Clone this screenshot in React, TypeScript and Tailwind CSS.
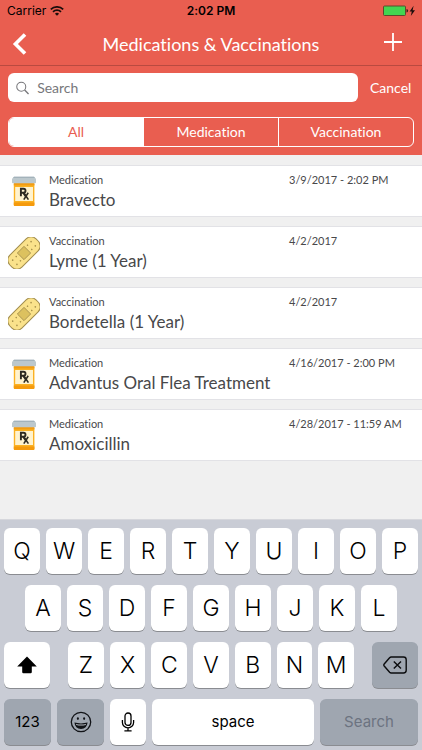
import { useState } from "react";
import clsx from "clsx";

type RecordKind = "Medication" | "Vaccination";

interface PetRecord {
  id: number;
  kind: RecordKind;
  name: string;
  date: string;
}

const RECORDS: PetRecord[] = [
  { id: 1, kind: "Medication", name: "Bravecto", date: "3/9/2017 - 2:02 PM" },
  { id: 2, kind: "Vaccination", name: "Lyme (1 Year)", date: "4/2/2017" },
  { id: 3, kind: "Vaccination", name: "Bordetella (1 Year)", date: "4/2/2017" },
  { id: 4, kind: "Medication", name: "Advantus Oral Flea Treatment", date: "4/16/2017 - 2:00 PM" },
  { id: 5, kind: "Medication", name: "Amoxicillin", date: "4/28/2017 - 11:59 AM" },
];

const FILTERS = ["All", "Medication", "Vaccination"];

const ROW_ONE = "QWERTYUIOP".split("");
const ROW_TWO = "ASDFGHJKL".split("");
const ROW_THREE = "ZXCVBNM".split("");

function PillBottleIcon() {
  return (
    <svg viewBox="0 0 32 32" className="h-8 w-8" aria-hidden="true">
      <path d="M5.8 8h20.6v21q0 1-1 1H6.8q-1 0-1-1z" fill="#fbb122" />
      <path d="M5.8 26.5h20.6V29q0 1-1 1H6.8q-1 0-1-1z" fill="#f59a0c" />
      <path d="M5.8 7h20.6v2.4H5.8z" fill="#f39c12" />
      <rect x="7.2" y="11" width="17.8" height="14" fill="#fff3cf" />
      <path d="M6 0.8h20l2 2v3.6q0 0.8-1 0.8H5q-1 0-1-0.8V2.8z" fill="#bcc8cd" />
      <path d="M6 0.8h20l1 1H5z" fill="#9babb3" />
      <g fill="none" stroke="#2d2a22" strokeWidth="1.9">
        <path d="M12.9 20.2v-7.4h2.6a2 2 0 0 1 0 4h-2.6M15.2 16.8l2.4 3.4" />
        <path d="M15.8 16.8l4.6 6.8M20.2 16.8l-4.4 6.8" strokeWidth="1.6" />
      </g>
    </svg>
  );
}

function BandageIcon() {
  return (
    <svg viewBox="0 0 32 32" className="h-8 w-8" aria-hidden="true">
      <g transform="rotate(-45 16 16)">
        <rect x="-2.5" y="7.5" width="37" height="17" rx="7" fill="#fae28b" stroke="#a08c4e" strokeWidth="1" />
        <rect x="11.3" y="11.3" width="9.4" height="9.4" fill="#dcc15f" stroke="#a08c4e" strokeWidth="0.8" />
        <g fill="#a8914a">
          <circle cx="3" cy="13" r="0.8" />
          <circle cx="3" cy="19" r="0.8" />
          <circle cx="8" cy="13" r="0.8" />
          <circle cx="8" cy="19" r="0.8" />
          <circle cx="24" cy="13" r="0.8" />
          <circle cx="24" cy="19" r="0.8" />
          <circle cx="29" cy="13" r="0.8" />
          <circle cx="29" cy="19" r="0.8" />
        </g>
      </g>
    </svg>
  );
}

function StatusBar() {
  return (
    <div className="grid h-[22px] grid-cols-3 items-center px-[7px] font-['Inter',sans-serif] text-xs text-black">
      <div className="flex items-center gap-1">
        <span>Carrier</span>
        <svg viewBox="0 0 14 10" className="h-[10px] w-[14px]" fill="none" stroke="#1b0d0b" strokeWidth="1.7" aria-hidden="true">
          <path d="M0.8 3.4a8.8 8.8 0 0 1 12.4 0" />
          <path d="M3 5.8a5.7 5.7 0 0 1 8 0" />
          <path d="M7 9.8L4.9 7.7a3 3 0 0 1 4.2 0z" fill="#1b0d0b" stroke="none" />
        </svg>
      </div>
      <span className="text-center font-semibold">2:02 PM</span>
      <svg viewBox="0 0 34 12" className="h-3 w-[34px] justify-self-end" aria-hidden="true">
        <rect x="2.5" y="1" width="22" height="9.5" rx="1" fill="#43d551" stroke="#5c4a2c" />
        <path d="M25.5 4q1.6 0.3 1.6 1.8t-1.6 1.8z" fill="#3a1f1a" />
        <path d="M32.6 0.8L28.6 6.4h2.2L29.8 11l4.2-5.8h-2.4z" fill="#1b0d0b" />
      </svg>
    </div>
  );
}

function RecordRow({ record }: { record: PetRecord }) {
  return (
    <li className="flex items-center gap-[9px] border-y border-[#e2e2e6] bg-white pt-[6px] pb-1 pl-2 text-[#48484a]">
      {record.kind === "Medication" ? <PillBottleIcon /> : <BandageIcon />}
      <div className="min-w-0 flex-1">
        <div className="flex text-[11px] leading-4">
          <span className="flex-1">{record.kind}</span>
          <span className="w-[133px]">{record.date}</span>
        </div>
        <p className="truncate text-[17px] leading-6">{record.name}</p>
      </div>
    </li>
  );
}

const KEY_BASE = "flex h-[46px] items-center justify-center rounded-md shadow-[0_1px_0_#8a8c91]";

function LetterKey({ letter, onPress }: { letter: string; onPress: (letter: string) => void }) {
  return (
    <button type="button" onClick={() => onPress(letter)} className={clsx(KEY_BASE, "min-w-0 flex-1 bg-white text-[23px] font-light")}>
      {letter}
    </button>
  );
}

function Keyboard({ onType, onDelete }: { onType: (text: string) => void; onDelete: () => void }) {
  return (
    <div className="mt-auto flex flex-col gap-[11px] border-t border-[#d6d7dc] bg-[#c9ccd5] px-[4px] pt-[8px] pb-[5px] font-['Inter',sans-serif] text-black">
      <div className="flex gap-[6px]">
        {ROW_ONE.map((letter) => (
          <LetterKey key={letter} letter={letter} onPress={onType} />
        ))}
      </div>
      <div className="flex gap-[6px] px-[21px]">
        {ROW_TWO.map((letter) => (
          <LetterKey key={letter} letter={letter} onPress={onType} />
        ))}
      </div>
      <div className="flex gap-[18px]">
        <button type="button" aria-label="Shift" className={clsx(KEY_BASE, "w-[46px] bg-white")}>
          <svg viewBox="0 0 20 18" className="h-[18px] w-5" aria-hidden="true">
            <path d="M10 0.5L19.8 10.6h-5V16q0 1.2-1.2 1.2H6.4Q5.2 17.2 5.2 16v-5.4h-5z" fill="#000" />
          </svg>
        </button>
        <div className="flex flex-1 gap-[6px]">
          {ROW_THREE.map((letter) => (
            <LetterKey key={letter} letter={letter} onPress={onType} />
          ))}
        </div>
        <button type="button" aria-label="Delete" onClick={onDelete} className={clsx(KEY_BASE, "w-[46px] bg-[#9fa6b0]")}>
          <svg viewBox="0 0 24 18" className="h-[18px] w-6" fill="none" stroke="#0b0c0e" strokeWidth="1.4" strokeLinejoin="round" aria-hidden="true">
            <path d="M8.2 1h12.3q2.7 0 2.7 2.7v10.6q0 2.7-2.7 2.7H8.2Q7.3 17 6.6 16.3L1.2 10q-0.8-1 0-2L6.6 1.7Q7.3 1 8.2 1z" />
            <path d="M10.8 5.4l7.2 7.2M18 5.4l-7.2 7.2" />
          </svg>
        </button>
      </div>
      <div className="flex gap-[6px]">
        <button type="button" className={clsx(KEY_BASE, "w-[47px] bg-[#9fa6b0] text-[15px]")}>
          123
        </button>
        <button type="button" aria-label="Emoji" className={clsx(KEY_BASE, "w-[47px] bg-[#9fa6b0]")}>
          <svg viewBox="0 0 22 22" className="h-[22px] w-[22px]" aria-hidden="true">
            <circle cx="11" cy="11" r="9.7" fill="none" stroke="#111317" strokeWidth="1.3" />
            <ellipse cx="7.9" cy="7.6" rx="1" ry="1.4" fill="#111317" />
            <ellipse cx="14.1" cy="7.6" rx="1" ry="1.4" fill="#111317" />
            <path d="M4.4 11.6q6.6 1.6 13.2 0q-0.7 6.3-6.6 6.3t-6.6-6.3z" fill="#111317" />
            <path d="M5.9 12.9q5.1 1 10.2 0l-0.4 1q-4.7 1-9.4 0z" fill="#b9bec6" />
          </svg>
        </button>
        <button type="button" aria-label="Dictate" className={clsx(KEY_BASE, "w-[36px] bg-white")}>
          <svg viewBox="0 0 14 20" className="h-5 w-[14px]" fill="none" stroke="#000" strokeWidth="1.3" aria-hidden="true">
            <rect x="4" y="1" width="6" height="12.4" rx="3" />
            <path d="M1.4 8v2.6a5.6 5.2 0 0 0 11.2 0V8M7 15.8v2.8M3.4 18.8h7.2" />
          </svg>
        </button>
        <button type="button" onClick={() => onType(" ")} className={clsx(KEY_BASE, "flex-1 bg-white text-[15px]")}>
          space
        </button>
        <button type="button" disabled className={clsx(KEY_BASE, "w-[98px] bg-[#9fa6b0] text-[15px] text-[#6c7380]")}>
          Search
        </button>
      </div>
    </div>
  );
}

export default function App() {
  const [query, setQuery] = useState<string>("");
  const [activeFilter, setActiveFilter] = useState<string>("All");

  const visibleRecords = RECORDS.filter(
    (record) =>
      (activeFilter === "All" || record.kind === activeFilter) &&
      record.name.toLowerCase().includes(query.toLowerCase())
  );

  return (
    <div className="flex min-h-screen flex-col bg-[#f0f0f0] font-['Lato',sans-serif] [font-variant-ligatures:none]">
      <header className="bg-[#e95e50] text-white">
        <StatusBar />

        {/* Navigation bar */}
        <div className="flex h-[44px] items-center justify-between border-b border-[#b94a40] px-[12px]">
          <button type="button" aria-label="Back" className="w-8">
            <svg viewBox="0 0 16 22" className="h-[22px] w-4" fill="none" stroke="#fff" strokeWidth="3.6" aria-hidden="true">
              <path d="M13 1.4L3.4 11L13 20.6" />
            </svg>
          </button>
          <h1 className="text-lg leading-6">Medications &amp; Vaccinations</h1>
          <button type="button" aria-label="Add" className="flex w-8 justify-end pr-2 pb-1">
            <svg viewBox="0 0 18 18" className="h-[18px] w-[18px] shrink-0" stroke="#fff" strokeWidth="1.8" aria-hidden="true">
              <path d="M9 0v18M0 9h18" />
            </svg>
          </button>
        </div>

        {/* Search and filter */}
        <div className="flex flex-col gap-[15px] px-2 pt-[7px] pb-2">
          <div className="flex items-center gap-3">
            <label className="flex h-[29px] flex-1 items-center gap-2 rounded-md bg-white pl-2">
              <svg viewBox="0 0 14 14" className="h-[14px] w-[14px]" fill="none" stroke="#77777b" strokeWidth="1.1" aria-hidden="true">
                <circle cx="5.6" cy="5.6" r="4.8" />
                <path d="M9.2 9.2l4.2 4.2" strokeWidth="1.5" />
              </svg>
              <input
                type="text"
                aria-label="Search"
                placeholder="Search"
                value={query}
                onChange={(e) => setQuery(e.target.value)}
                className="w-full bg-transparent text-sm text-[#48484a] outline-none placeholder:text-[#77777b]"
              />
            </label>
            <button type="button" onClick={() => setQuery("")} className="w-11 text-left text-sm">
              Cancel
            </button>
          </div>

          <div className="flex h-[30px] overflow-hidden rounded-md border border-white">
            {FILTERS.map((filter) => (
              <button
                key={filter}
                type="button"
                aria-pressed={activeFilter === filter}
                onClick={() => setActiveFilter(filter)}
                className={clsx(
                  "flex-1 border-l border-white text-sm first:border-l-0",
                  activeFilter === filter ? "bg-white text-[#e95e50]" : "text-white"
                )}
              >
                {filter}
              </button>
            ))}
          </div>
        </div>
      </header>

      <ul className="flex flex-col gap-[9px] py-[10px]">
        {visibleRecords.map((record) => (
          <RecordRow key={record.id} record={record} />
        ))}
      </ul>

      <Keyboard
        onType={(text) => setQuery(query + text)}
        onDelete={() => setQuery(query.slice(0, -1))}
      />
    </div>
  );
}
